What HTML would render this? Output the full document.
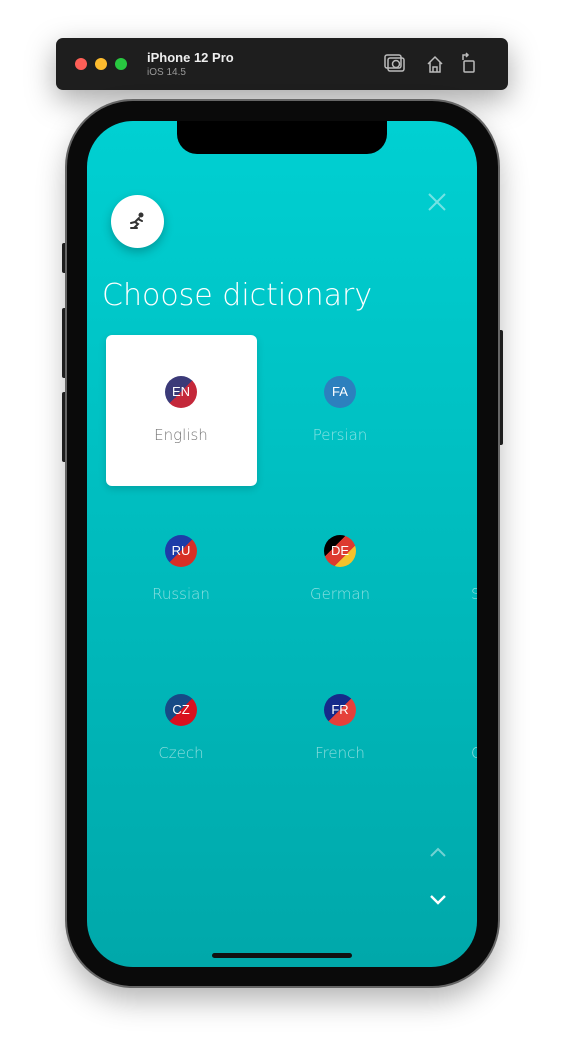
<!DOCTYPE html>
<html><head><style>
body{margin:0;width:564px;height:1062px;background:#fff;position:relative;overflow:hidden;font-family:"Liberation Sans",sans-serif}
.bar{position:absolute;left:56px;top:38px;width:452px;height:52px;background:#1e1e1e;border-radius:7px;box-shadow:0 10px 30px rgba(0,0,0,.35)}
.dot{position:absolute;top:20px;width:12px;height:12px;border-radius:50%}
.phone{position:absolute;left:67px;top:101px;width:431px;height:885px;background:#0a0a0a;border-radius:66px;box-shadow:0 0 0 2px #666,0 14px 30px rgba(0,0,0,.3)}
.screen{position:absolute;left:87px;top:121px;width:390px;height:846px;border-radius:46px;background:linear-gradient(#00d0d2,#00a8aa);overflow:hidden}
.notch{position:absolute;left:90px;top:0;width:210px;height:33px;background:#000;border-radius:0 0 20px 20px}
.flag{position:absolute;width:32px;height:32px;border-radius:50%;color:#fff;font-size:13px;line-height:32px;text-align:center}
.lbl{position:absolute;width:150px;text-align:center;font-size:15px;color:rgba(255,255,255,.55);font-family:"DejaVu Sans",sans-serif;font-weight:300}
.btn{position:absolute;width:6px;background:#222;border-radius:2px}
</style></head><body>
<div class="bar">
<div class="dot" style="left:19px;background:#fe5f57"></div>
<div class="dot" style="left:39px;background:#febc2e"></div>
<div class="dot" style="left:59px;background:#28c840"></div>
<div style="position:absolute;left:91px;top:12px;color:#eee;font-weight:bold;font-size:13px">iPhone 12 Pro</div>
<div style="position:absolute;left:91px;top:29px;color:#999;font-size:10px">iOS 14.5</div>
<svg style="position:absolute;left:328px;top:14px" width="100" height="24" fill="none" stroke="#bbb" stroke-width="1.5">
<rect x="4" y="6" width="16" height="13" rx="2"/><rect x="1" y="3" width="16" height="13" rx="2"/><circle cx="12" cy="12" r="3.5"/>
<path d="M44 12 L51 5 L58 12 M46 10 V20 H56 V10 M49 20 V15 H53 V20"/>
<rect x="80" y="9" width="10" height="11" rx="1"/><path d="M79 8 V3 H84 M82 1 L84 3 L82 5"/>
</svg></div>
<div class="btn" style="left:62px;top:243px;height:30px"></div>
<div class="btn" style="left:62px;top:308px;height:70px"></div>
<div class="btn" style="left:62px;top:392px;height:70px"></div>
<div class="btn" style="left:497px;top:330px;height:115px"></div>
<div class="phone"></div>
<div class="screen">
<div class="notch"></div>
<svg style="position:absolute;left:341px;top:72px" width="18" height="18" stroke="rgba(255,255,255,.45)" stroke-width="2"><path d="M1 1L17 17M17 1L1 17"/></svg>
<div style="position:absolute;left:24px;top:74px;width:53px;height:53px;border-radius:50%;background:#fff;box-shadow:0 4px 10px rgba(0,0,0,.25)">
<svg style="position:absolute;left:17px;top:17px" width="18" height="18" fill="none" stroke="#333" stroke-width="2" stroke-linecap="round"><circle cx="13" cy="3" r="1.5" fill="#333"/><path d="M11 6 L7 10 L10 12 L6 16 M7 10 L3 11 M10 7 L14 9 M3 16 H9"/></svg></div>
<div style="position:absolute;left:15px;top:157px;font-size:30px;color:#fff;font-weight:200;font-family:'DejaVu Sans',sans-serif">Choose dictionary</div>
<div style="position:absolute;left:19px;top:214px;width:151px;height:151px;background:#fff;border-radius:6px;box-shadow:0 3px 8px rgba(0,0,0,.15)"></div>
<div class="flag" style="left:78px;top:255px;background:linear-gradient(135deg,#3b3a78 50%,#c4283a 50%)">EN</div>
<div class="lbl" style="left:19px;top:305px;color:#777">English</div>
<div class="flag" style="left:237px;top:255px;background:#2c80be">FA</div>
<div class="lbl" style="left:178px;top:305px">Persian</div>
<div class="flag" style="left:78px;top:414px;background:linear-gradient(135deg,#1d3ca8 50%,#d72f26 50%)">RU</div>
<div class="lbl" style="left:19px;top:464px">Russian</div>
<div class="flag" style="left:237px;top:414px;background:linear-gradient(135deg,#000 35%,#dd3a30 35%,#dd3a30 65%,#f4c22c 65%)">DE</div>
<div class="lbl" style="left:178px;top:464px">German</div>
<div class="lbl" style="left:340px;top:464px;width:60px;text-align:left;padding-left:44px">S</div>
<div class="flag" style="left:78px;top:573px;background:linear-gradient(135deg,#164a86 50%,#d9101e 50%)">CZ</div>
<div class="lbl" style="left:19px;top:623px">Czech</div>
<div class="flag" style="left:237px;top:573px;background:linear-gradient(135deg,#152a8a 50%,#e5403a 50%)">FR</div>
<div class="lbl" style="left:178px;top:623px">French</div>
<div class="lbl" style="left:340px;top:623px;width:60px;text-align:left;padding-left:44px">C</div>
<svg style="position:absolute;left:343px;top:726px" width="16" height="10" fill="none" stroke="rgba(255,255,255,.45)" stroke-width="2"><path d="M1 9L8 2L15 9"/></svg>
<svg style="position:absolute;left:343px;top:774px" width="16" height="10" fill="none" stroke="#fff" stroke-width="2.4"><path d="M1 1L8 8L15 1"/></svg>
<div style="position:absolute;left:125px;top:832px;width:140px;height:5px;border-radius:3px;background:#111"></div>
</div>
</body></html>
